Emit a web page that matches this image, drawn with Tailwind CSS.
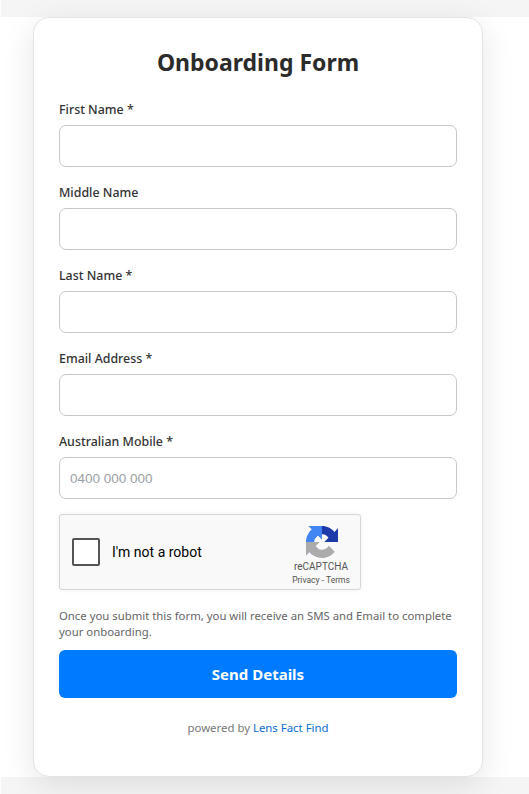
<!DOCTYPE html>
<html lang="en">
<head>
    <meta charset="UTF-8">
    <meta name="viewport" content="width=device-width, initial-scale=1.0">
    <title>Onboarding Form</title>
    <script src="https://cdn.jsdelivr.net/npm/@tailwindcss/browser@4"></script>
</head>
<body class="bg-[#f5f5f5] border-l border-white font-['Noto_Sans',sans-serif] h-[794px] overflow-hidden">

<div class="mt-[17px] h-[760px] bg-white">
    <div class="relative ml-[32px] w-[450px] h-[760px] bg-white rounded-2xl border border-[#e4e4e4] shadow-[0_8px_32px_rgba(0,0,0,0.1)] px-[25px] pt-[26px]">
        <h1 class="text-[23px] leading-[36px] font-bold text-center text-[#2b2b2b]">Onboarding Form</h1>

        <form class="mt-[21px]">
            <!-- Fields -->
            <div class="flex flex-col gap-[17px]">
                <div>
                    <label class="block text-[12.400px] leading-[18px] font-medium text-[#333]">First Name *</label>
                    <input type="text" class="mt-[6px] block w-full h-[42px] px-2.5 bg-white rounded-[7px] border border-[#c8c8c8]">
                </div>
                <div>
                    <label class="block text-[12.400px] leading-[18px] font-medium text-[#333]">Middle Name</label>
                    <input type="text" class="mt-[6px] block w-full h-[42px] px-2.5 bg-white rounded-[7px] border border-[#c8c8c8]">
                </div>
                <div>
                    <label class="block text-[12.400px] leading-[18px] font-medium text-[#333]">Last Name *</label>
                    <input type="text" class="mt-[6px] block w-full h-[42px] px-2.5 bg-white rounded-[7px] border border-[#c8c8c8]">
                </div>
                <div>
                    <label class="block text-[12.400px] leading-[18px] font-medium text-[#333]">Email Address *</label>
                    <input type="email" class="mt-[6px] block w-full h-[42px] px-2.5 bg-white rounded-[7px] border border-[#c8c8c8]">
                </div>
                <div>
                    <label class="block text-[12.400px] leading-[18px] font-medium text-[#333]">Australian Mobile *</label>
                    <input type="tel" placeholder="0400 000 000" class="mt-[6px] block w-full h-[42px] px-2.5 bg-white rounded-[7px] border border-[#c8c8c8] text-[13.500px] font-['Liberation_Sans',sans-serif] placeholder:text-[#9a9fa6]">
                </div>
            </div>

            <!-- Captcha -->
            <div class="mt-[15px] w-[302px] h-[76px] flex items-center justify-between bg-[#f9f9f9] border border-[#d6d6d6] rounded-[3px] shadow-[0_0_4px_rgba(0,0,0,0.08)] font-['Roboto',sans-serif]">
                <div class="flex items-center">
                    <div class="ml-[12px] w-[28px] h-[28px] bg-white border-2 border-[#555] rounded-[2px]"></div>
                    <span class="ml-[12px] text-[14px] text-black">I'm not a robot</span>
                </div>
                <div class="w-[70px] mr-[4px] flex flex-col items-center">
                    <svg class="mt-[8px] ml-[2px]" width="32" height="32" viewBox="0 0 64 64">
                        <path fill="#1c3aa9" d="M64 31.955l-.033-1.37V4.687l-7.16 7.16C50.948 4.674 42.033.093 32.05.093c-10.4 0-19.622 4.96-25.458 12.64l11.736 11.86c1.15-2.127 2.784-3.955 4.76-5.32 2.05-1.6 4.952-2.908 8.962-2.908.484 0 .858.057 1.133.163 4.97.392 9.277 3.135 11.813 7.116l-8.3 8.3c10.514-.04 22.392-.065 27.95.01"/>
                        <path fill="#4285f4" transform="rotate(-90 32 32)" d="M64 31.955l-.033-1.37V4.687l-7.16 7.16C50.948 4.674 42.033.093 32.05.093c-10.4 0-19.622 4.96-25.458 12.64l11.736 11.86c1.15-2.127 2.784-3.955 4.76-5.32 2.05-1.6 4.952-2.908 8.962-2.908.484 0 .858.057 1.133.163 4.97.392 9.277 3.135 11.813 7.116l-8.3 8.3c10.514-.04 22.392-.065 27.95.01"/>
                        <path fill="#ababab" transform="rotate(180 32 32)" d="M64 31.955l-.033-1.37V4.687l-7.16 7.16C50.948 4.674 42.033.093 32.05.093c-10.4 0-19.622 4.96-25.458 12.64l11.736 11.86c1.15-2.127 2.784-3.955 4.76-5.32 2.05-1.6 4.952-2.908 8.962-2.908.484 0 .858.057 1.133.163 4.97.392 9.277 3.135 11.813 7.116l-8.3 8.3c10.514-.04 22.392-.065 27.95.01"/>
                    </svg>
                    <span class="mt-[2px] text-[10px] leading-[13px] text-[#555]">reCAPTCHA</span>
                    <span class="mt-[1px] text-[8.500px] leading-[12px] text-[#555] whitespace-nowrap">Privacy - Terms</span>
                </div>
            </div>

            <p class="mt-[18px] text-[11.350px] leading-[16px] text-[#666]">Once you submit this form, you will receive an SMS and Email to complete your onboarding.</p>

            <button type="button" class="mt-[10px] block w-full h-[48px] bg-[#007bff] rounded-[6px] text-white text-[15px] font-bold">Send Details</button>
        </form>

        <p class="mt-[21px] text-center text-[11.400px] leading-[18px] text-[#777]">powered by <a class="text-[#0a6ed1]">Lens Fact Find</a></p>
    </div>
</div>

</body>
</html>
